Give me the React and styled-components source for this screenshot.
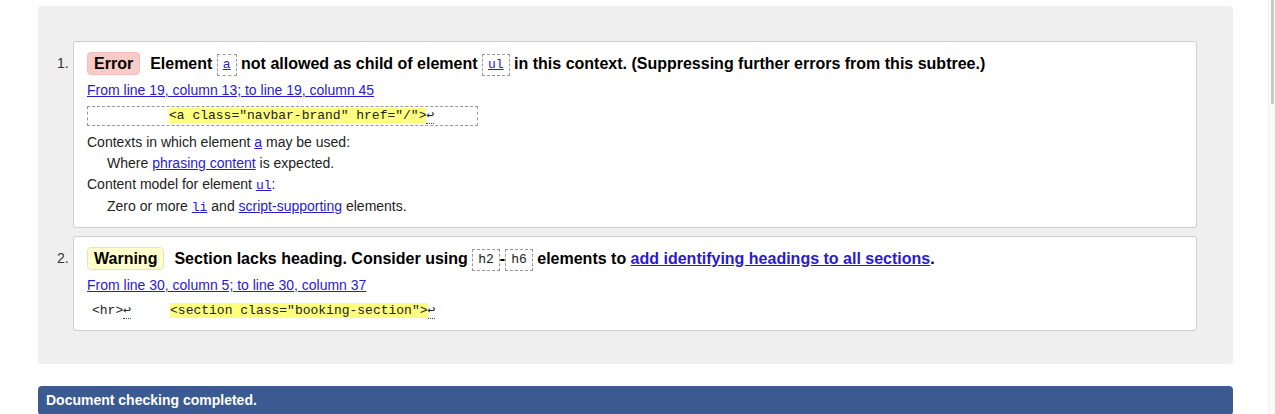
import styled, { createGlobalStyle } from "styled-components";

const GlobalStyle = createGlobalStyle`
  html, body {
    margin: 0;
    padding: 0;
    background: #fff;
    font-family: "Liberation Sans", Arial, sans-serif;
    color: #000;
    overflow: hidden;
  }
`;

const Page = styled.div`
  padding: 6px 0 0 38px;
  width: 1195px;
`;

const Panel = styled.div`
  background-color: #efefef;
  border-radius: 4px;
  padding: 35px 36px 33px 35px;
`;

const MessageList = styled.ol`
  margin: 0;
  padding: 0;
  list-style: none;
  display: flex;
  flex-direction: column;
  gap: 8px;
`;

const Item = styled.li`
  position: relative;
  background: #fff;
  border: 1px solid #cfcfcf;
  border-radius: 3px;
  padding: 10px 13px 9px 13px;
`;

const ItemNumber = styled.span`
  position: absolute;
  left: -17px;
  top: 13px;
  font-size: 14px;
  color: #333;
`;

const Title = styled.p`
  margin: 0;
  font-size: 16px;
  font-weight: bold;
  line-height: 22px;
`;

const Badge = styled.strong`
  display: inline-block;
  padding: 0 6px;
  margin-right: 10px;
  border-radius: 4px;
  line-height: 21px;
  background-color: ${({ kind }) => (kind === "error" ? "#f8cbc8" : "#ffffcc")};
  border: 1px solid ${({ kind }) => (kind === "error" ? "#f3c0bc" : "#e4e4c2")};
`;

const Code = styled.code`
  display: inline-block;
  font-family: "Liberation Mono", "DejaVu Sans Mono", monospace;
  font-size: 13px;
  font-weight: normal;
  line-height: 20px;
  padding: 0 5px;
  border: 1px dashed #999;
  vertical-align: 1px;
  color: #222;
`;

const InlineCode = styled.code`
  font-family: "Liberation Mono", "DejaVu Sans Mono", monospace;
  font-size: 13px;
`;

const Link = styled.a`
  color: #2a1ad0;
  text-decoration: underline;
  cursor: pointer;
`;

const Location = styled.p`
  margin: 6px 0 0 0;
  font-size: 14px;
  line-height: 17px;
`;

const Extract = styled.p`
  margin: 7px 0 0 0;
  font-family: "Liberation Mono", "DejaVu Sans Mono", monospace;
  font-size: 13px;
  line-height: 18px;
  white-space: pre;
  color: #222;
  padding: 0 3px 0 ${({ boxed }) => (boxed ? "3px" : "4px")};
  width: ${({ boxed }) => (boxed ? "383px" : "auto")};
  border: 1px dashed ${({ boxed }) => (boxed ? "#999" : "transparent")};
`;

const Mark = styled.mark`
  background-color: #ffff80;
  color: #222;
`;

const Lf = styled.span`
  border-bottom: 1px dotted #444;
`;

const Details = styled.div`
  margin-top: 6px;
  font-size: 14px;
  line-height: 21px;
  color: #222;
`;

const Indent = styled.div`
  padding-left: 20px;
`;

const Footer = styled.div`
  margin-top: 22px;
  background-color: #3b5a92;
  border-radius: 4px;
  color: #fff;
  font-size: 14px;
  font-weight: bold;
  line-height: 29px;
  padding: 0 8px;
`;

const ScrollTrack = styled.div`
  position: fixed;
  top: 0;
  right: 0;
  width: 6px;
  height: 100%;
  background: #fafafa;
  border-left: 1px solid #eee;
`;

const ScrollThumb = styled.div`
  width: 3px;
  height: 104px;
  margin-left: 2px;
  background: #c8c8c8;
`;

const App = () => {
  return (
    <>
      <GlobalStyle />
      <Page>
        <Panel>
          <MessageList>
            <Item>
              <ItemNumber>1.</ItemNumber>
              <Title>
                <Badge kind="error">Error</Badge>
                Element <Code><Link>a</Link></Code> not allowed as child of element{" "}
                <Code><Link>ul</Link></Code> in this context. (Suppressing further errors
                from this subtree.)
              </Title>
              <Location>
                <Link>From line 19, column 13; to line 19, column 45</Link>
              </Location>
              <Extract boxed>
                {"          "}
                <Mark>{'<a class="navbar-brand" href="/">'}</Mark>
                <Lf>↩</Lf>
              </Extract>
              <Details>
                <div>
                  Contexts in which element <Link>a</Link> may be used:
                </div>
                <Indent>
                  Where <Link>phrasing content</Link> is expected.
                </Indent>
                <div>
                  Content model for element <InlineCode><Link>ul</Link></InlineCode>:
                </div>
                <Indent>
                  Zero or more <InlineCode><Link>li</Link></InlineCode> and{" "}
                  <Link>script-supporting</Link> elements.
                </Indent>
              </Details>
            </Item>
            <Item>
              <ItemNumber>2.</ItemNumber>
              <Title>
                <Badge kind="warning">Warning</Badge>
                Section lacks heading. Consider using <Code>h2</Code>-<Code>h6</Code>{" "}
                elements to <Link>add identifying headings to all sections</Link>.
              </Title>
              <Location>
                <Link>From line 30, column 5; to line 30, column 37</Link>
              </Location>
              <Extract>
                {"<hr>"}
                <Lf>↩</Lf>
                {"     "}
                <Mark>{'<section class="booking-section">'}</Mark>
                <Lf>↩</Lf>
              </Extract>
            </Item>
          </MessageList>
        </Panel>
        <Footer>Document checking completed.</Footer>
      </Page>
      <ScrollTrack>
        <ScrollThumb />
      </ScrollTrack>
    </>
  );
};

export default App;
